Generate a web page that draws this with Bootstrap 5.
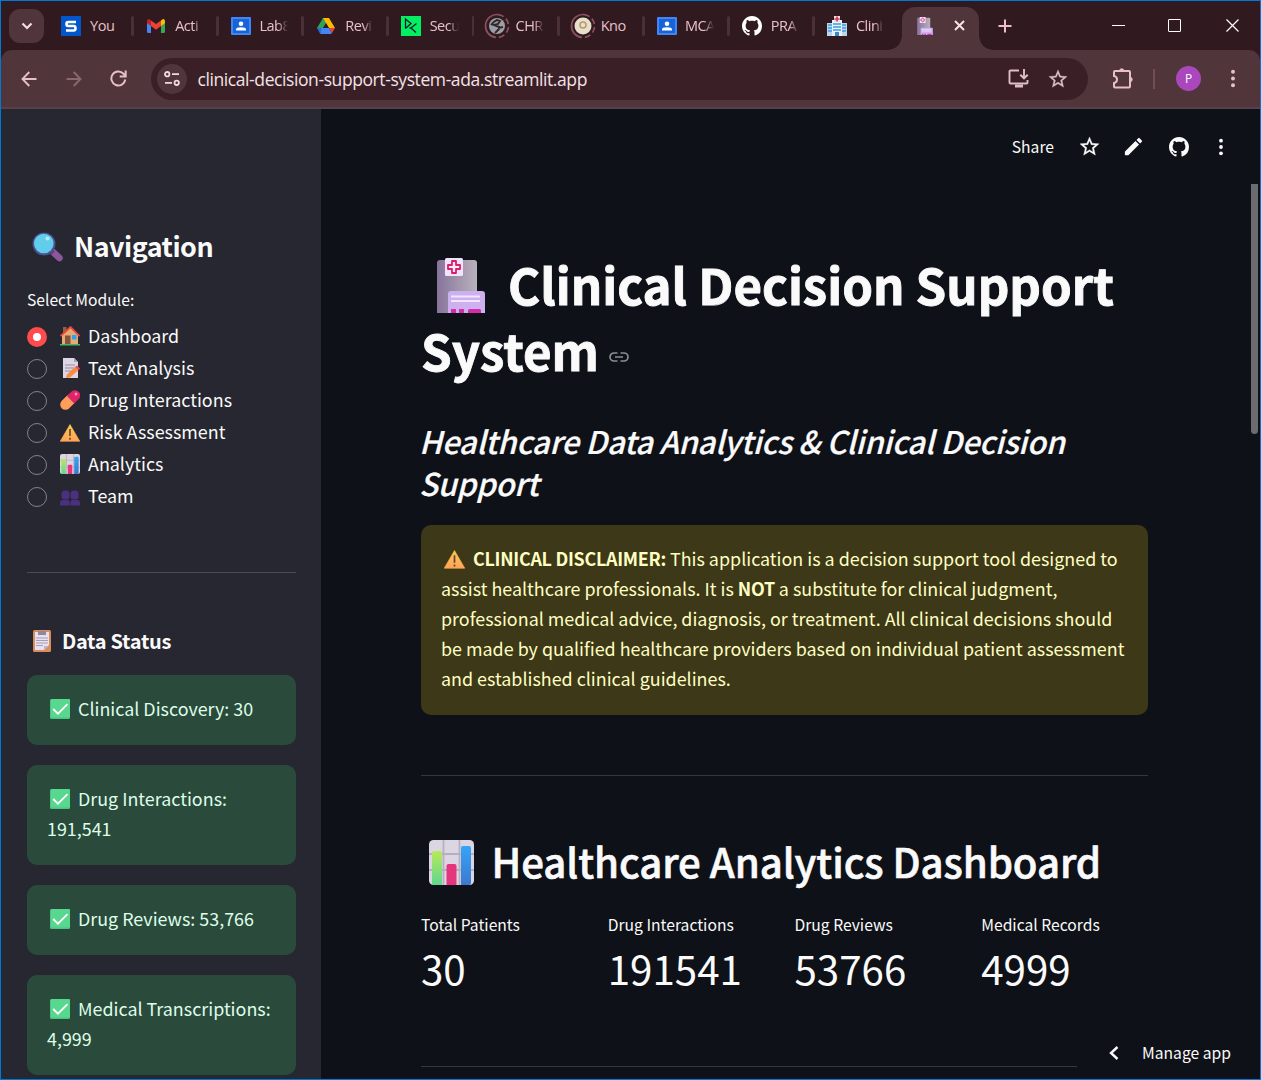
<!DOCTYPE html>
<html lang="en">
<head>
<meta charset="utf-8">
<meta name="viewport" content="width=device-width, initial-scale=1">
<title>Clinical Decision Support System</title>
<link href="https://cdn.jsdelivr.net/npm/bootstrap@5.3.0/dist/css/bootstrap.min.css" rel="stylesheet">
<style>
html,body{height:100%;margin:0;overflow:hidden}
body{font-family:"Noto Sans CJK SC","Noto Sans",sans-serif;font-size:17.9px;line-height:30px;color:#fafafa;background:#0e1117}
svg{display:block;flex:none}
.win{width:1261px;height:1080px;border:1px solid #0078d7;overflow:hidden}
.ui{font-family:"Open Sans","Noto Sans",sans-serif;color:#e8c1ca}
.tabstrip{height:49px;background:#30191f}
.menu-btn{width:35px;height:34px;border-radius:11px;background:#50353a;margin:0 5px 0 8px}
.tab{width:85.1px;height:49px;padding-left:12px}
.tab .ico{width:30px;height:26px}
.tab .ttl{width:29px;font-size:14.5px;letter-spacing:-.5px;line-height:20px;white-space:nowrap;-webkit-mask-image:linear-gradient(90deg,#000 65%,transparent 100%);mask-image:linear-gradient(90deg,#000 65%,transparent 100%)}
.tab .ttl.full{-webkit-mask-image:none;mask-image:none}
.tab .sep{width:3px;height:20px;border-radius:2px;background:#4b3036;margin-left:13px}
.tab.nosep .sep{visibility:hidden}
.tab-on{width:77px;height:43px;background:#50353a;border-radius:13px 13px 0 0;margin:6px 0 0 2px;padding:0 14px 6px 15px;position:relative}
.tab-on::before,.tab-on::after{content:"";position:absolute;bottom:0;width:14px;height:14px}
.tab-on::before{left:-14px;background:radial-gradient(circle at 0 0,transparent 13.5px,#50353a 14px)}
.tab-on::after{right:-14px;background:radial-gradient(circle at 100% 0,transparent 13.5px,#50353a 14px)}
.corner{background:#30191f}
.toolbar{height:57px;background:#50353a;border-radius:11px 11px 0 0;padding-left:16px}
.omni{width:937px;height:42px;border-radius:21px;background:#3a2026;margin-left:24px;padding:0 19px 0 6px}
.site{width:30px;height:30px;border-radius:50%;background:#50353a}
.url{font-size:17.5px;letter-spacing:-.41px;color:#f3e2e6;margin-left:10.5px;padding-top:1px;white-space:nowrap}
.avatar{width:25px;height:25px;border-radius:50%;background:#ab47bc;color:#fff;font-size:12px}
.edge{height:2px;background:#54414a}
.side{width:320px;background:#262730;padding:120px 25px 0 26px}
.nav-h{font-size:26.9px;line-height:36px;font-weight:700;padding-left:5px;gap:11px}
.nav-h span{letter-spacing:-.5px;line-height:34px;padding-bottom:2px}
.lbl{font-size:15.67px;line-height:24px}
.opt{height:32px}
.opt span:last-child{line-height:30px;padding-bottom:2px}
.dot{width:20px;height:20px;border-radius:50%;border:1px solid #83848a;margin:1px 13px 0 0}
.dot.on{border:6.5px solid #ff4b4b;background:#fff}
.opt svg{margin-right:8px}
.rule{height:1px;background:#4a4b53}
.status-h{font-size:20px;line-height:28px;margin:54px 0 20px;padding-left:6px;gap:11px;letter-spacing:-.3px}
.ok{background:#2a4b3b;color:#dffde9;border-radius:10px;padding:18px 19px 22px 20px;margin-bottom:20px}
.ok svg,.warnbox svg{display:inline-block;vertical-align:-3px;margin:0 8px 0 3px}
.app{width:939px;background:#0e1117;position:relative}
.topbar{height:75px;font-size:15.67px;padding:0 36px 0 0}
.body-col{width:727px;margin-left:100px}
h1.ttl1{font-size:49.2px;line-height:66px;font-weight:700;margin:0;white-space:nowrap;-webkit-text-stroke:.9px #fafafa}
h1.ttl1 svg{-webkit-text-stroke:0}
h3.sub{font-size:31.2px;line-height:42px;font-weight:500;font-style:italic;margin:0 0 0 -2px;white-space:nowrap;letter-spacing:-.35px;-webkit-text-stroke:.2px #fafafa}
.warnbox{background:#3d3818;color:#ffffc2;border-radius:10px;padding:18px 20px 22px;height:190px;white-space:nowrap}
.warnbox b{letter-spacing:-.27px}
h2.dash{font-size:40.2px;line-height:54px;height:54px;font-weight:500;margin:0;white-space:nowrap;padding-left:8px;letter-spacing:-.08px;-webkit-text-stroke:.6px #fafafa}
h2.dash span{line-height:52px;padding-bottom:2px;margin-left:17.5px}
.big{font-size:40.3px;line-height:56px}
.metrics{--bs-gutter-x:20px}
.thumb{position:absolute;right:2px;top:75px;width:7px;height:250px;background:#6b6c70;border-radius:0 0 4px 4px}
.manage{position:absolute;right:0;bottom:0;width:183px;height:52px;background:#0e1117;font-size:15.67px;padding-left:32px}
</style>
<script src="https://cdn.jsdelivr.net/npm/bootstrap@5.3.0/dist/js/bootstrap.bundle.min.js"></script>
</head>
<body>
<svg width="0" height="0" class="position-absolute">
<defs>
<linearGradient id="gw" x1="0" x2="1"><stop offset="0" stop-color="#87749b"/><stop offset="1" stop-color="#b9b1bd"/></linearGradient>
<linearGradient id="gg" x1="0" y1="0" x2="0" y2="1"><stop offset="0" stop-color="#b8e85c"/><stop offset="1" stop-color="#5fd790"/></linearGradient>
<linearGradient id="gb" x1="0" y1="0" x2="0" y2="1"><stop offset="0" stop-color="#35a5fa"/><stop offset="1" stop-color="#3c78cd"/></linearGradient>
<linearGradient id="gy" x1="0" y1="0" x2="0" y2="1"><stop offset="0" stop-color="#ffc84f"/><stop offset="1" stop-color="#ffa456"/></linearGradient>
<symbol id="hospital" viewBox="0 0 48 55"><path d="M0 55V5a3 3 0 0 1 3-3h34a3 3 0 0 1 3 3v50z" fill="url(#gw)"/><rect x="8" y="0" width="18" height="18" rx="1.500" fill="#f0e4fa"/><path d="M15 3h4v4h4v4h-4v4h-4v-4h-4V7h4z" fill="#fbe9f5" stroke="#dc1e6a" stroke-width="1.800" stroke-linejoin="round"/><path d="M11 55V36a3 3 0 0 1 3-3h31a3 3 0 0 1 3 3v19z" fill="#cdb0ee"/><path d="M14 38.500h29M14 43h29" stroke="#f1e5ff" stroke-width="2.200"/><path d="M14 55v-4h5v4zM22 55v-4h5v4zM31 55v-3l1.500-1H43l1 1v3z" fill="#d52cae"/></symbol>
<symbol id="chart" viewBox="0 0 45 45"><rect width="45" height="45" rx="4.500" fill="#dcd5e2"/><path d="M14.500 0v45M30.500 0v45M0 14h45M0 30h45" stroke="#b7afbf" stroke-width="1.800"/><path d="M3 45V13q0-2 2-2h6q2 0 2 2v32z" fill="url(#gg)"/><path d="M17.500 45V26q0-2 2-2h6q2 0 2 2v19z" fill="#e5357c"/><path d="M32 45V8q0-2 2-2h6q2 0 2 2v35q0 2-2 2z" fill="url(#gb)"/></symbol>
<symbol id="warn" viewBox="0 0 20 18"><path d="M10 .5 19.800 17.300H.2z" fill="url(#gy)" stroke="url(#gy)" stroke-width=".6" stroke-linejoin="round"/><path d="M10 5v7M10 13.700v2" stroke="#5b4440" stroke-width="1.600"/></symbol>
<symbol id="check" viewBox="0 0 20 20"><rect width="20" height="20" rx="1.500" fill="#4cc584"/><rect x="1" y="0" width="19" height="18.500" rx="1" fill="#58d88e"/><path d="M3.700 10.500 8 14.700 17 5.700" fill="none" stroke="#fff" stroke-width="1.800" stroke-linecap="round"/></symbol>
<symbol id="lens" viewBox="0 0 31 30"><path d="M21 20l6.500 6" stroke="#8d569a" stroke-width="6.500" stroke-linecap="round"/><path d="M17 17l4 4" stroke="#543b74" stroke-width="4"/><circle cx="12" cy="12" r="11.500" fill="#4c5190"/><circle cx="11.800" cy="11.500" r="9.800" fill="#62cdea"/><circle cx="15.500" cy="6.500" r="2" fill="#b2edfa"/></symbol>
<symbol id="house" viewBox="0 0 20 20"><path d="M3 1h3.500v7H3z" fill="#a05a43"/><path d="M2 9l8-8 8 8v9H2z" fill="#e8aa72"/><path d="M.5 10 10.500 1 19.500 10" fill="none" stroke="#e2493d" stroke-width="1.800"/><rect x="5" y="9.500" width="5.500" height="8.500" fill="#87533f"/><rect x="12" y="9" width="4.500" height="4.500" fill="#27a5f5"/><path d="M0 18h20v1.500H0z" fill="#3fba61"/></symbol>
<symbol id="memo" viewBox="0 0 20 20"><path d="M3 0h11l4 4v16H3z" fill="#ddd6e4"/><path d="M14 0v4h4" fill="#a9a0b5"/><path d="M5 7h10M5 10h9M5 13h7" stroke="#968ea2" stroke-width="1"/><path d="M7 16.500 15 9l3.500 3L10 19.500l-4 .5z" fill="#fb8b3c"/><path d="M15 9l2-1.500 3 3-1.700 1.800z" fill="#ef4b5e"/></symbol>
<symbol id="pill" viewBox="0 0 20 20"><path d="M5.500 14.500l5-5" stroke="#ff9e5b" stroke-width="10.500" stroke-linecap="round"/><path d="M6.900 6.100 11.600 1.400a5.250 5.250 0 0 1 7.400 7.400l-4.800 4.700z" fill="#e0246a"/><circle cx="16" cy="4" r="1.500" fill="#ff8fb8"/></symbol>
<symbol id="team" viewBox="0 0 20 16"><g fill="#4b3080"><rect x="1.500" y=".5" width="8" height="9" rx="3.500"/><rect x="10.500" y=".5" width="8" height="9" rx="3.500"/><path d="M0 15.500V13q0-3 3-3h4q2.700 0 2.700 3v2.500zM10.300 15.500V13q0-3 2.700-3h4q3 0 3 3v2.500z"/></g></symbol>
<symbol id="clip" viewBox="0 0 18 22"><rect width="18" height="22" rx="1.500" fill="#d98d59"/><path d="M2 2h14v13l-5 5H2z" fill="#e9e0f1"/><path d="M11 20v-4h5z" fill="#bdb0cb"/><path d="M5 1h8v4H5z" fill="#8f889b"/><path d="M3 8h12M3 10.500h12M3 13h12M3 15.500h7" stroke="#a79fb3"/></symbol>
<symbol id="github" viewBox="0 0 16 16"><path fill="currentColor" d="M8 0C3.580 0 0 3.580 0 8c0 3.540 2.290 6.530 5.470 7.590.4.070.55-.17.55-.38 0-.19-.01-.82-.01-1.490-2.010.37-2.530-.49-2.690-.94-.09-.23-.48-.94-.82-1.130-.28-.15-.68-.52-.01-.53.63-.01 1.080.58 1.230.82.72 1.210 1.870.87 2.330.66.07-.52.28-.87.51-1.070-1.780-.2-3.640-.89-3.640-3.950 0-.87.31-1.590.82-2.150-.08-.2-.36-1.020.08-2.120 0 0 .67-.21 2.200.82.64-.18 1.320-.27 2-.27s1.360.09 2 .27c1.530-1.040 2.200-.82 2.200-.82.44 1.100.16 1.920.08 2.120.51.56.82 1.270.82 2.150 0 3.070-1.870 3.750-3.650 3.950.29.25.54.73.54 1.480 0 1.070-.01 1.930-.01 2.200 0 .21.15.46.55.38A8.010 8.010 0 0 0 16 8c0-4.420-3.580-8-8-8z"/></symbol>
<symbol id="star" viewBox="0 0 24 24"><path fill="currentColor" stroke="currentColor" stroke-width=".3" d="M22 9.240l-7.190-.62L12 2 9.190 8.630 2 9.240l5.460 4.730L5.820 21 12 17.270 18.180 21l-1.630-7.030L22 9.240zM12 15.400l-3.760 2.270 1-4.280-3.320-2.880 4.380-.38L12 6.100l1.710 4.040 4.380.38-3.320 2.880 1 4.280L12 15.400z"/></symbol>
<symbol id="classroom" viewBox="0 0 20 18"><rect width="20" height="18" rx="1" fill="#4285f4"/><rect x="2" y="2" width="16" height="14" fill="#1764d8"/><circle cx="10" cy="6.800" r="2.300" fill="#fff"/><path d="M5 13.500v-1q0-2.300 5-2.300t5 2.300v1z" fill="#fff"/></symbol>
<symbol id="dots" viewBox="0 0 6 20"><g fill="currentColor"><circle cx="3" cy="3" r="2.100"/><circle cx="3" cy="10" r="2.100"/><circle cx="3" cy="17" r="2.100"/></g></symbol>
</defs>
</svg>

<div class="win d-flex flex-column">
  <header class="ui">
    <div class="tabstrip d-flex align-items-center">
      <div class="menu-btn d-flex align-items-center justify-content-center"><svg width="12" height="8" viewBox="0 0 12 8" fill="none" stroke="#f5dce2" stroke-width="2.200"><path d="M1.500 1.500 6 6l4.500-4.500"/></svg></div>
      <div class="tab d-flex align-items-center"><div class="ico d-flex align-items-center"><svg width="20" height="20" viewBox="0 0 20 20"><path fill="#0156cc" d="M0 0h20v20H0z"/><path d="M15 6H7.200Q5.500 6 5.500 8t1.700 2h5.600q1.700 0 1.700 2.200T12.800 14.500H5" fill="none" stroke="#fff" stroke-width="2.600"/></svg></div><div class="ttl full">You</div><div class="sep"></div></div>
      <div class="tab d-flex align-items-center"><div class="ico d-flex align-items-center"><svg width="20" height="20" viewBox="0 0 20 20"><path d="M1 5v10.500q0 1.500 1.500 1.500H5V8z" fill="#4285f4"/><path d="M19 5v10.500q0 1.500-1.500 1.500H15V8z" fill="#34a853"/><path d="M15 4.500 17 3q2 0 2 2.200V7l-4 3z" fill="#fbbc04"/><path d="M5 4.500 3 3Q1 3 1 5.200V7l4 3z" fill="#c5221f"/><path d="M5 4.500 10 8l5-3.500V10l-5 3.800L5 10z" fill="#ea4335"/></svg></div><div class="ttl">Acti</div><div class="sep"></div></div>
      <div class="tab d-flex align-items-center"><div class="ico d-flex align-items-center"><svg width="20" height="18"><use href="#classroom"/></svg></div><div class="ttl">Lab8</div><div class="sep"></div></div>
      <div class="tab d-flex align-items-center"><div class="ico d-flex align-items-center"><svg width="20" height="20" viewBox="0 0 20 20"><path d="M7 2h6l-3 5-5.500 9L1 12z" fill="#30a352"/><path d="M7 2h6l6 10h-6z" fill="#ffba00"/><path d="M1 12h5l-2 5.500Z" fill="#2b6be0"/><path d="M6 12h7l3 5-1 1H5l-1-.5z" fill="#4285f4"/><path d="M13 12h6l-3 5z" fill="#ea4335"/><path d="M10 7.500 12.700 12H7.300z" fill="#30191f"/></svg></div><div class="ttl">Revi</div><div class="sep"></div></div>
      <div class="tab d-flex align-items-center"><div class="ico d-flex align-items-center"><svg width="20" height="20" viewBox="0 0 20 20"><path fill="#03ef62" d="M0 0h20v20H0z"/><path d="M4.500 12.500V3l5.500 4.500-5.500 5M15.500 7.500 10 12l5 4.500M10 12H8.500" fill="none" stroke="#05192d" stroke-width="1.300"/></svg></div><div class="ttl">Secu</div><div class="sep"></div></div>
      <div class="tab d-flex align-items-center"><div class="ico d-flex align-items-center"><svg width="26" height="26" viewBox="0 0 26 26" style="margin-left:-2px"><circle cx="13" cy="13" r="11.500" fill="none" stroke="#8a5260" stroke-width="1.700" stroke-dasharray="6 3 6 3 6 3 6 3 36.250 0" transform="rotate(-85 13 13)"/><circle cx="13" cy="13" r="8" fill="#9aa0a6"/><path d="M7 12q3-4 6-5l3 1-2 3-4 1 5 2v2l-4 4M14 15l5-1" fill="none" stroke="#35242a" stroke-width="1.900"/></svg></div><div class="ttl">CHR</div><div class="sep"></div></div>
      <div class="tab d-flex align-items-center"><div class="ico d-flex align-items-center"><svg width="26" height="26" viewBox="0 0 26 26" style="margin-left:-2px"><circle cx="13" cy="13" r="11.500" fill="none" stroke="#8a5260" stroke-width="1.700" stroke-dasharray="6 3 6 3 6 3 6 3 36.250 0" transform="rotate(-85 13 13)"/><circle cx="13" cy="13" r="8.500" fill="#e9e0cb"/><circle cx="13" cy="12" r="3" fill="none" stroke="#b59a6f" stroke-width="1.500"/></svg></div><div class="ttl full">Kno</div><div class="sep"></div></div>
      <div class="tab d-flex align-items-center"><div class="ico d-flex align-items-center"><svg width="20" height="18"><use href="#classroom"/></svg></div><div class="ttl">MCA</div><div class="sep"></div></div>
      <div class="tab d-flex align-items-center"><div class="ico d-flex align-items-center text-white"><svg width="20" height="20"><use href="#github"/></svg></div><div class="ttl">PRA</div><div class="sep"></div></div>
      <div class="tab nosep d-flex align-items-center"><div class="ico d-flex align-items-center"><svg width="20" height="20" viewBox="0 0 20 20"><path d="M0 7h6v13H0zM14 7h6v13h-6z" fill="#b9d6ea"/><path d="M5 4h10v16H5z" fill="#e8f1f7"/><path d="M1 9h4M1 12h4M1 15h4M15 9h4M15 12h4M15 15h4M6 8h8M6 11h8M6 14h8" stroke="#3c9de8" stroke-width="1.600"/><path d="M7 0h6v6H7z" fill="#f3dce2"/><path d="M10 .5v5M7.500 3h5" stroke="#d8344e" stroke-width="1.600"/><path d="M8 16h4v4H8z" fill="#3c85c7"/></svg></div><div class="ttl">Clini</div><div class="sep"></div></div>
      <div class="tab-on d-flex align-items-center justify-content-between"><svg width="16" height="18"><use href="#hospital"/></svg><svg width="11" height="11" viewBox="0 0 11 11" stroke="#f5e4e8" stroke-width="2"><path d="M1 1l9 9M10 1l-9 9"/></svg></div>
      <svg class="ms-auto" style="margin-right:100px" width="14" height="14" viewBox="0 0 14 14" stroke="#eebfcb" stroke-width="2"><path d="M7 0.500v13M.5 7h13"/></svg>
      <svg style="margin-right:43px" width="13" height="13" viewBox="0 0 13 13" stroke="#fff"><path d="M0 6.500h13"/></svg>
      <svg style="margin-right:45px" width="13" height="13" viewBox="0 0 13 13" stroke="#fff" fill="none"><rect x=".5" y=".5" width="12" height="12" rx=".5"/></svg>
      <svg style="margin-right:21px" width="13" height="13" viewBox="0 0 13 13" stroke="#fff" stroke-width="1.200"><path d="M.5.5l12 12M12.500.5l-12 12"/></svg>
    </div>
    <div class="corner">
    <div class="toolbar d-flex align-items-center">
      <svg style="margin-left:4px" width="16" height="16" viewBox="0 0 16 16" fill="none" stroke="#e8bec8" stroke-width="1.900"><path d="M15.500 8H1.800M8.300 1 1.500 8l6.800 7"/></svg>
      <svg style="margin-left:29px" width="16" height="16" viewBox="0 0 16 16" fill="none" stroke="#896870" stroke-width="1.900"><path d="M.5 8h13.700M7.700 1l6.800 7-6.800 7"/></svg>
      <svg style="margin-left:28px" width="17" height="17" viewBox="0 0 17 17" fill="none" stroke="#e8bec8" stroke-width="2"><path d="M15.300 9.500A7 7 0 1 1 13.500 3.700L15 5.200M15.700.5v6h-6"/></svg>
      <div class="omni d-flex align-items-center">
        <div class="site d-flex align-items-center justify-content-center"><svg width="16" height="15" viewBox="0 0 16 15" fill="none" stroke="#f0dadf" stroke-width="1.800"><circle cx="3.200" cy="3.200" r="2.200"/><path d="M8 3.200h7M1 11.800h7"/><circle cx="12.700" cy="11.800" r="2.200"/></svg></div>
        <div class="url">clinical-decision-support-system-ada.streamlit.app</div>
        <svg class="ms-auto" width="21" height="19" viewBox="0 0 21 19" fill="none" stroke="#dcbfc6" stroke-width="1.900"><path d="M11 1.500H2.500q-1 0-1 1v11q0 1 1 1h16q1 0 1-1V11M16 0v9M12.300 5.700 16 9.300l3.700-3.600"/><path d="M7 17h8" stroke-width="3"/></svg>
        <svg style="margin:0 0 0 18px;color:#dcbfc6" width="22" height="22"><use href="#star"/></svg>
      </div>
      <svg style="margin-left:24px" width="22" height="21" viewBox="0 0 22 21" fill="none" stroke="#e8bec8" stroke-width="2"><path d="M2 4q0-1 1-1h14q1 0 1 1v14.500q0 1-1 1H3q-1 0-1-1V15q3-.5 3-3.500T2 8z"/><path d="M7.500 3a2.200 2.200 0 0 1 4.400 0zM18 9.300a2.200 2.200 0 0 1 0 4.400z" fill="#e8bec8" stroke-width="1"/></svg>
      <div style="width:2px;height:20px;background:#714d56;margin:0 21px 0 19px"></div>
      <div class="avatar d-flex align-items-center justify-content-center">P</div>
      <svg style="margin-left:29px;color:#e8bec8" width="6" height="19"><use href="#dots"/></svg>
    </div></div>
    <div class="edge"></div>
  </header>

  <div class="d-flex flex-grow-1 overflow-hidden">
    <aside class="side flex-shrink-0">
      <h2 class="nav-h d-flex align-items-center m-0"><svg width="31" height="30"><use href="#lens"/></svg><span>Navigation</span></h2>
      <div class="lbl" style="margin-top:23px">Select Module:</div>
      <div style="margin-top:8px">
        <div class="opt d-flex align-items-center"><span class="dot on"></span><svg width="20" height="20"><use href="#house"/></svg><span>Dashboard</span></div>
        <div class="opt d-flex align-items-center"><span class="dot"></span><svg width="20" height="20"><use href="#memo"/></svg><span>Text Analysis</span></div>
        <div class="opt d-flex align-items-center"><span class="dot"></span><svg width="20" height="20"><use href="#pill"/></svg><span>Drug Interactions</span></div>
        <div class="opt d-flex align-items-center"><span class="dot"></span><svg style="margin-top:2px" width="20" height="18"><use href="#warn"/></svg><span>Risk Assessment</span></div>
        <div class="opt d-flex align-items-center"><span class="dot"></span><svg width="20" height="20"><use href="#chart"/></svg><span>Analytics</span></div>
        <div class="opt d-flex align-items-center"><span class="dot"></span><svg class="mt-1" width="20" height="16"><use href="#team"/></svg><span>Team</span></div>
      </div>
      <div class="rule" style="margin-top:60px"></div>
      <h3 class="status-h d-flex align-items-center fw-bold"><svg width="18" height="22"><use href="#clip"/></svg><span>Data Status</span></h3>
      <div class="ok"><svg width="20" height="20"><use href="#check"/></svg>Clinical Discovery: 30</div>
      <div class="ok"><svg width="20" height="20"><use href="#check"/></svg>Drug Interactions:<br>191,541</div>
      <div class="ok"><svg width="20" height="20"><use href="#check"/></svg>Drug Reviews: 53,766</div>
      <div class="ok"><svg width="20" height="20"><use href="#check"/></svg>Medical Transcriptions:<br>4,999</div>
    </aside>

    <main class="app flex-shrink-0">
      <div class="topbar d-flex align-items-center justify-content-end">
        <span>Share</span>
        <svg style="margin-left:24px" width="23" height="23"><use href="#star"/></svg>
        <svg style="margin-left:21px" width="23" height="23" viewBox="0 0 24 24" fill="currentColor"><path d="M3 17.460v3.040c0 .28.22.5.5.5h3.040c.13 0 .26-.05.35-.15L17.810 9.940l-3.750-3.750L3.150 17.100c-.1.100-.15.220-.15.360zM20.710 7.040a.996.996 0 0 0 0-1.410l-2.340-2.340a.996.996 0 0 0-1.410 0l-1.830 1.830 3.750 3.750 1.830-1.830z"/></svg>
        <svg style="margin-left:24px" width="20" height="20"><use href="#github"/></svg>
        <svg style="margin-left:29px" width="6" height="18"><use href="#dots"/></svg>
      </div>
      <div class="body-col">
        <h1 class="ttl1" style="padding-top:67px"><svg class="d-inline-block" style="vertical-align:-8px;margin:0 23px 0 16px" width="48" height="55"><use href="#hospital"/></svg><span>Clinical Decision Support</span><br><span>System</span><svg class="d-inline-block" style="vertical-align:9px;margin-left:10px" width="20" height="10" viewBox="0 0 20 10" fill="none" stroke="#8b8d92" stroke-width="1.700"><path d="M8.500 1H5a4 4 0 0 0 0 8h3.500M11.500 1H15a4 4 0 0 1 0 8h-3.500M6 5h8"/></svg></h1>
        <h3 class="sub" style="margin-top:37px"><span>Healthcare Data Analytics &amp; Clinical Decision</span><br><span>Support</span></h3>
        <div class="warnbox" style="margin-top:21px"><svg width="21" height="19"><use href="#warn"/></svg><b>CLINICAL DISCLAIMER:</b> This application is a decision support tool designed to<br>assist healthcare professionals. It is <b>NOT</b> a substitute for clinical judgment,<br>professional medical advice, diagnosis, or treatment. All clinical decisions should<br>be made by qualified healthcare providers based on individual patient assessment<br>and established clinical guidelines.</div>
        <div class="rule" style="margin-top:60px;background:#35373d"></div>
        <h2 class="dash d-flex align-items-center" style="margin-top:59px"><svg width="45" height="45"><use href="#chart"/></svg><span>Healthcare Analytics Dashboard</span></h2>
        <div class="row metrics" style="margin-top:24px">
          <div class="col-3"><div class="lbl">Total Patients</div><div class="big" style="margin-top:3px">30</div></div>
          <div class="col-3"><div class="lbl">Drug Interactions</div><div class="big" style="margin-top:3px">191541</div></div>
          <div class="col-3"><div class="lbl">Drug Reviews</div><div class="big" style="margin-top:3px">53766</div></div>
          <div class="col-3"><div class="lbl">Medical Records</div><div class="big" style="margin-top:3px">4999</div></div>
        </div>
        <div class="rule" style="margin-top:70px;background:#35373d"></div>
      </div>
      <div class="thumb"></div>
      <div class="manage d-flex align-items-center"><svg width="10" height="14" viewBox="0 0 10 14" fill="none" stroke="#fafafa" stroke-width="2.400"><path d="M8.500 1 2 7l6.500 6"/></svg><span style="margin-left:23px">Manage app</span></div>
    </main>
  </div>
</div>
</body>
</html>
